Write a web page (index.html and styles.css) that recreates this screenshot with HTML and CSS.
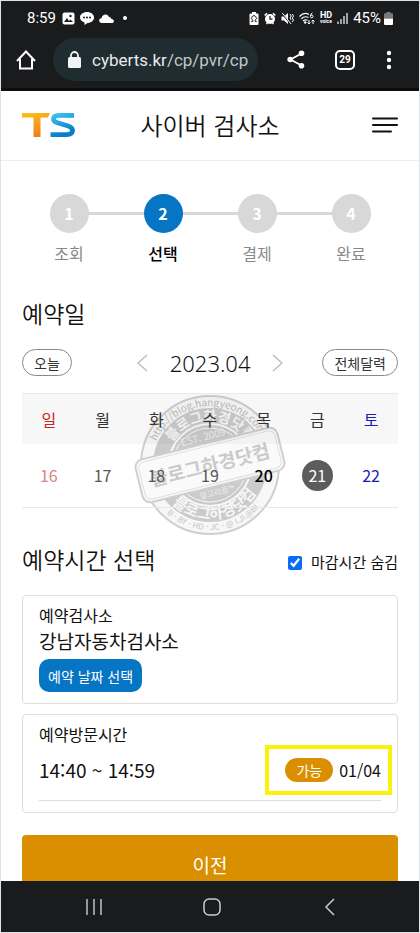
FILE: index.html
```html
<!DOCTYPE html>
<html lang="ko">
<head>
  <meta charset="UTF-8">
  <meta name="viewport" content="width=device-width, initial-scale=1">
  <title>사이버 검사소</title>
  <link rel="stylesheet" href="styles.css">
</head>
<body>
  <div class="phone">
    <div class="status-bar">
      <span>8:59</span>
      <svg width="13" height="13" viewBox="0 0 13 13"><rect x="0.5" y="0.5" width="12" height="12" rx="2" fill="#fff"/><path d="M2 10l3-4 2 3 1.500-1.500L11 10z" fill="#1a1b1d"/><circle cx="8.500" cy="4" r="1.200" fill="#1a1b1d"/></svg>
      <svg width="14" height="14" viewBox="0 0 14 14"><path d="M7 1c3.900 0 7 2.400 7 5.500S10.900 12 7.500 12L4.500 14v-2.600C1.800 10.600 0 8.800 0 6.500 0 3.400 3.100 1 7 1z" fill="#fff"/><circle cx="4" cy="6.500" r="1" fill="#1a1b1d"/><circle cx="7" cy="6.500" r="1" fill="#1a1b1d"/><circle cx="10" cy="6.500" r="1" fill="#1a1b1d"/></svg>
      <svg width="15" height="9" viewBox="0 0 15 9"><path d="M2.500 9a2.400 2.400 0 0 1 0-4.800C3 1.800 4.500 0.500 6.500 0.500c1.700 0 3 1 3.500 2.600 1.400 0 2.200.9 2.400 2 1.600.1 2.500.9 2.500 2.100 0 1.100-.8 1.800-2 1.800z" fill="#fff"/></svg>
      <span class="dot"></span>
      <div class="status-right">
        <svg width="10" height="13" viewBox="0 0 10 13"><path d="M3 0h4v1.500h1.500q1 0 1 1V12q0 1-1 1h-7q-1 0-1-1V2.500q0-1 1-1H3z" fill="#fff"/><path d="M2.300 9.500h1.500V8.200a2.400 2.400 0 1 1 2.400 0v1.300h1.500" fill="none" stroke="#1a1b1d" stroke-width="1"/></svg>
        <svg width="12" height="13" viewBox="0 0 12 13"><circle cx="6" cy="7" r="5" fill="#fff"/><path d="M0.700 3.500L3 1.200M11.300 3.500L9 1.200M2.500 12L3.500 11M9.500 12L8.500 11" stroke="#fff" stroke-width="1.600"/><path d="M6 4v3.200h2.500" stroke="#1a1b1d" stroke-width="1.200" fill="none"/></svg>
        <svg width="13" height="13" viewBox="0 0 13 13"><path d="M0.500 4.500H3L7 1v11L3 8.500H0.500z" fill="#fff"/><path d="M0.500 1l9.500 11" stroke="#1a1b1d" stroke-width="1.500"/><path d="M1.200 1l9 11" stroke="#fff"/><path d="M9 2l1.200 2L9 6l1.200 2M11.300 2l1.200 2-1.200 2 1.200 2-1.200 2" stroke="#fff" fill="none"/></svg>
        <svg width="16" height="13" viewBox="0 0 16 13"><path d="M0.500 4.500Q5-0.500 10 2.500M2.200 6.800Q5.500 3.500 9.500 5.500M4 9Q6 7 8.500 8.300" stroke="#fff" stroke-width="1.200" fill="none"/><circle cx="6.200" cy="10.500" r="1.200" fill="#fff"/><path d="M13.500 1q-2 .5-2 3" stroke="#fff" fill="none"/><circle cx="12.700" cy="4.500" r="1.300" stroke="#fff" fill="none"/><path d="M10 8v4M8.500 10.500L10 12l1.500-1.500M14 12V8M12.500 9.500L14 8l1.500 1.500" stroke="#fff" fill="none"/></svg>
        <span class="hd">HD<small>voice</small></span>
        <svg width="11" height="12" viewBox="0 0 11 12"><path d="M1 12V9.500M4 12V7M7 12V4M10 12V1" stroke="#fff" stroke-width="1.200"/></svg>
        <span>45%</span>
        <svg class="battery" width="9" height="13" viewBox="0 0 9 13"><path d="M2.500 0h4v1.200H8q1 0 1 1V6.500H0V2.200q0-1 1-1h1.500z" fill="#77797b"/><path d="M0 6.500h9V12q0 1-1 1H1q-1 0-1-1z" fill="#fff"/></svg>
      </div>
    </div>

    <div class="browser-bar">
      <button class="icon-button" aria-label="홈">
        <svg width="20" height="20" viewBox="0 0 20 20"><path d="M4 9v9.500h12V9M1 11L10 1.500 19 11" fill="none" stroke="#fff" stroke-width="2"/></svg>
      </button>
      <div class="address">
        <svg width="13" height="17" viewBox="0 0 13 17"><rect y="6" width="13" height="11" rx="1.500" fill="#f1f3f4"/><path d="M3 7V4.500a3.500 3.500 0 0 1 7 0V7" fill="none" stroke="#f1f3f4" stroke-width="1.800"/></svg>
        <span class="url">cyberts.kr<span>/cp/pvr/cp</span></span>
      </div>
      <button class="icon-button share" aria-label="공유">
        <svg width="18" height="19" viewBox="0 0 18 19"><path d="M14.500 3.500L3.500 9.500l11 6" fill="none" stroke="#fff" stroke-width="1.800"/><circle cx="14.500" cy="3.200" r="2.800" fill="#fff"/><circle cx="3.200" cy="9.500" r="2.800" fill="#fff"/><circle cx="14.500" cy="15.800" r="2.800" fill="#fff"/></svg>
      </button>
      <button class="tabs">29</button>
      <button class="icon-button more" aria-label="메뉴">
        <svg width="6" height="20" viewBox="0 0 6 20"><circle cx="3" cy="3" r="2.200" fill="#fff"/><circle cx="3" cy="10" r="2.200" fill="#fff"/><circle cx="3" cy="17" r="2.200" fill="#fff"/></svg>
      </button>
    </div>

    <header class="site-header">
      <a href="#" class="logo" aria-label="TS">
        <svg width="54" height="24" viewBox="0 0 54 24">
          <defs>
            <linearGradient id="orange" x1="0" y1="0" x2="0.300" y2="1"><stop offset="0" stop-color="#ffc01c"/><stop offset="1" stop-color="#f07f1c"/></linearGradient>
            <linearGradient id="blue" x1="0" y1="0" x2="0.500" y2="1"><stop offset="0" stop-color="#3cc4ee"/><stop offset="1" stop-color="#067fcb"/></linearGradient>
          </defs>
          <path d="M0 0h28l-2 4.500h-7.500V24h-7V4.500H0z" fill="url(#orange)"/>
          <path d="M52 2.400H37q-5.500 0-5.500 3.600 0 2.500 4 3.800l10 3q5 1.500 5 4.700 0 4.100-6 4.100H28.500" fill="none" stroke="url(#blue)" stroke-width="4.800"/>
        </svg>
      </a>
      <h1>사이버 검사소</h1>
      <button class="icon-button" aria-label="전체 메뉴">
        <svg width="26" height="16" viewBox="0 0 26 16"><path d="M1 1.500h24M1 8h24M1 14.500h18" stroke="#111" stroke-width="2" stroke-linecap="round"/></svg>
      </button>
    </header>

    <main>
      <ol class="steps">
        <li><b>1</b>조회</li>
        <li class="active"><b>2</b>선택</li>
        <li><b>3</b>결제</li>
        <li><b>4</b>완료</li>
      </ol>

      <h2>예약일</h2>
      <div class="month-bar">
        <button class="pill">오늘</button>
        <div class="month">
          <button class="icon-button" aria-label="이전 달"><svg width="11" height="18" viewBox="0 0 11 18"><path d="M10 1L1 9l9 8" fill="none" stroke="#bbb" stroke-width="1.400"/></svg></button>
          <span>2023.04</span>
          <button class="icon-button" aria-label="다음 달"><svg width="11" height="18" viewBox="0 0 11 18"><path d="M1 1l9 8-9 8" fill="none" stroke="#bbb" stroke-width="1.400"/></svg></button>
        </div>
        <button class="pill">전체달력</button>
      </div>

      <div class="calendar">
        <svg class="stamp" width="156" height="144" viewBox="-78 -72 156 144">
          <defs>
            <path id="arc-url" d="M-59 0A59 59 0 0 1 59 0"/>
            <path id="arc-top" d="M-44 0A44 44 0 0 1 44 0"/>
            <path id="arc-bottom" d="M-54 0A54 54 0 0 0 54 0"/>
            <path id="arc-outer" d="M-65 0A65 65 0 0 0 65 0"/>
          </defs>
          <circle r="69" fill="#f7f7f7" stroke="#cfcfcf" stroke-width="2"/>
          <circle r="57" fill="#cbcbcb"/>
          <circle r="41" fill="#cbcbcb" stroke="#f7f7f7" stroke-width="2"/>
          <circle r="37" fill="none" stroke="#f7f7f7"/>
          <g text-anchor="middle" font-weight="700">
            <text font-size="10" font-weight="400" fill="#bcbcbc"><textPath href="#arc-url" startOffset="48%">http://blog.hangyeong.com</textPath></text>
            <text font-size="14" fill="#f7f7f7"><textPath href="#arc-top" startOffset="50%">블로그하경닷컴</textPath></text>
            <text font-size="15" fill="#f7f7f7"><textPath href="#arc-bottom" startOffset="54%">블로그하경닷컴</textPath></text>
            <text font-size="8" font-weight="400" fill="#c4c4c4"><textPath href="#arc-outer" startOffset="52%">B - BY - HD - JC - @ I.JI.@BI</textPath></text>
            <g transform="rotate(-14)">
              <text y="-25" font-size="10" font-weight="400" fill="#eee">EST. 2009</text>
              <rect x="-73" y="-22" width="146" height="44" rx="8" fill="#fafafa" stroke="#cfcfcf" stroke-width="2"/>
              <rect x="-70" y="-19" width="140" height="38" rx="6" fill="none" stroke="#e0e0e0"/>
              <text y="7" font-size="19" fill="#cacaca">블로그하경닷컴</text>
              <text y="31" font-size="8" font-weight="400" fill="#eee">알고리즘™</text>
            </g>
          </g>
        </svg>
        <table>
          <thead>
            <tr><th class="sun">일</th><th>월</th><th>화</th><th>수</th><th>목</th><th>금</th><th class="sat">토</th></tr>
          </thead>
          <tbody>
            <tr><td class="sun">16</td><td>17</td><td>18</td><td>19</td><td class="open">20</td><td><span class="selected">21</span></td><td class="sat">22</td></tr>
          </tbody>
        </table>
      </div>

      <div class="time-head">
        <h2>예약시간 선택</h2>
        <label><input type="checkbox" checked>마감시간 숨김</label>
      </div>

      <section class="card">
        <h3>예약검사소</h3>
        <p>강남자동차검사소</p>
        <button class="date-button">예약 날짜 선택</button>
      </section>

      <section class="card visit">
        <h3>예약방문시간</h3>
        <div class="time-row">
          <p>14:40 ~ 14:59</p>
          <div class="slots"><span class="badge">가능</span>01/04</div>
        </div>
      </section>

      <button class="prev-button">이전</button>
    </main>

    <nav class="system-nav">
      <button class="icon-button" aria-label="최근 앱"><svg width="18" height="18" viewBox="0 0 18 18"><path d="M2 1v16M9 1v16M16 1v16" stroke="#ccc" stroke-width="1.400"/></svg></button>
      <button class="icon-button" aria-label="홈 화면"><svg width="18" height="18" viewBox="0 0 18 18"><rect x="1" y="1" width="16" height="16" rx="5" fill="none" stroke="#ccc" stroke-width="1.500"/></svg></button>
      <button class="icon-button" aria-label="뒤로"><svg width="18" height="18" viewBox="0 0 18 18"><path d="M13 1L5 9l8 8" fill="none" stroke="#ccc" stroke-width="1.500"/></svg></button>
    </nav>
  </div>
</body>
</html>
```

FILE: styles.css
```css
*, *::before, *::after {
  box-sizing: border-box;
}

body {
  margin: 0;
  font-family: "Noto Sans CJK KR", sans-serif;
  font-size: 16px;
  line-height: 24px;
  color: #111;
}

h1, h2, h3, p {
  margin: 0;
  font-weight: 400;
}

h1, h2 {
  font-size: 24px;
  line-height: 34px;
  font-weight: 350;
}

h2 {
  font-size: 23px;
}

h3 {
  font-size: 16px;
}

button {
  font-family: inherit;
  cursor: pointer;
}

svg {
  display: block;
  flex-shrink: 0;
}

.phone {
  display: flex;
  flex-direction: column;
  height: 100vh;
  border: 1px solid #dfe3e3;
  background: #fff;
}

.icon-button {
  padding: 0;
  border: none;
  background: none;
}

/* phone status bar */
.status-bar {
  display: flex;
  align-items: center;
  gap: 5px;
  height: 34px;
  padding: 0 26px;
  background: #1a1b1d;
  color: #fff;
  font-family: Roboto, sans-serif;
  font-size: 15px;
}

.status-bar > span:first-child {
  margin-right: 1px;
}

.dot {
  width: 4px;
  height: 4px;
  margin-left: 4px;
  border-radius: 50%;
  background: #fff;
}

.status-right {
  display: flex;
  align-items: center;
  gap: 5px;
  margin-left: auto;
}

.hd {
  font-size: 9px;
  line-height: 7px;
  font-weight: 700;
}

.hd small {
  display: block;
  font-size: 5px;
  line-height: 5px;
}

.battery {
  margin-left: -2px;
}

/* browser bar */
.browser-bar {
  display: flex;
  align-items: center;
  height: 56px;
  padding: 0 27px 4px 15px;
  border-bottom: 3px solid #0e0e10;
  background: #1a1b1d;
  color: #fff;
  font-family: Roboto, sans-serif;
}

.address {
  display: flex;
  flex: 1;
  align-items: center;
  gap: 11px;
  min-width: 0;
  height: 43px;
  margin-left: 17px;
  padding: 0 10px 0 15px;
  border-radius: 22px;
  background: #1f2c30;
}

.url {
  overflow: hidden;
  font-size: 17px;
  white-space: nowrap;
  color: #e8eaed;
}

.url span {
  color: #c0c8ca;
}

.share {
  margin-left: 29px;
}

.tabs {
  width: 20px;
  height: 20px;
  margin-left: 30px;
  padding: 0;
  border: 2px solid #fff;
  border-radius: 5px;
  background: none;
  color: #fff;
  font-size: 10px;
  line-height: 16px;
  font-weight: 700;
}

.more {
  margin-left: 31px;
}

/* site header */
.site-header {
  display: flex;
  align-items: center;
  justify-content: space-between;
  height: 70px;
  padding: 0 21px 2px;
  border-bottom: 1px solid #eee;
  flex-shrink: 0;
}

.site-header .logo {
  width: 54px;
}

.site-header .icon-button {
  width: 54px;
  display: flex;
  justify-content: flex-end;
}

main {
  flex: 1;
  min-height: 0;
  padding: 33px 21px 0;
  overflow: hidden;
}

.steps {
  display: flex;
  margin: 0 0 31px;
  padding: 0;
  list-style: none;
  text-align: center;
  color: #888;
}

.steps li {
  position: relative;
  flex: 1;
}

.steps li + li::before {
  content: "";
  position: absolute;
  top: 18px;
  right: 50%;
  width: 100%;
  height: 3px;
  background: #d8d8d8;
}

.steps b {
  display: block;
  position: relative;
  z-index: 1;
  width: 39px;
  height: 39px;
  margin: 0 auto 8px;
  border-radius: 50%;
  background: #d8d8d8;
  color: #fff;
  line-height: 39px;
}

.steps .active {
  color: #000;
  font-weight: 500;
}

.steps .active b {
  background: #0675c4;
}

.month-bar {
  display: flex;
  align-items: center;
  justify-content: space-between;
  margin: 19px 0 17px;
}

.pill {
  height: 27px;
  padding: 0 11px;
  border: 1px solid #888;
  border-radius: 14px;
  background: #fff;
  color: #333;
  font-size: 14px;
  line-height: 24px;
}

.month {
  display: flex;
  align-items: center;
  gap: 22px;
  margin-left: 26px;
  font-family: "Noto Sans", sans-serif;
  font-size: 22px;
  font-weight: 300;
}

/* calendar */
.calendar {
  position: relative;
}

.stamp {
  position: absolute;
  top: 0;
  left: 50%;
  transform: translateX(-50%);
}

table {
  position: relative;
  width: 100%;
  border-collapse: collapse;
  table-layout: fixed;
  border-top: 1px solid #e8e8e8;
  border-bottom: 1px solid #e8e8e8;
}

th, td {
  padding: 0;
  color: #555;
  font-weight: 400;
  text-align: center;
}

th {
  height: 50px;
  background: rgba(0, 0, 0, 0.03);
  color: #333;
}

td {
  height: 64px;
}

th.sun {
  color: #c8232c;
}

td.sun {
  color: #e08080;
}

th.sat, td.sat {
  color: #1c1cb4;
}

td.open {
  color: #000;
  font-weight: 500;
}

.selected {
  display: block;
  width: 31px;
  height: 31px;
  margin: 0 auto;
  border-radius: 50%;
  background: #5c5c5c;
  color: #fff;
  line-height: 31px;
}

/* time selection */
.time-head {
  display: flex;
  align-items: center;
  justify-content: space-between;
  margin: 34px 0 19px;
}

.time-head label {
  display: flex;
  align-items: center;
  padding-top: 6px;
  font-size: 15px;
}

.time-head input {
  width: 14px;
  height: 14px;
  margin: 2px 9px 0 0;
  accent-color: #0a6cf5;
}

.card {
  margin-bottom: 10px;
  padding: 7px 16px 11px;
  border: 1px solid #ddd;
  border-radius: 4px;
}

.card p {
  font-size: 19px;
  line-height: 28px;
}

.date-button {
  display: block;
  height: 33px;
  margin-top: 4px;
  padding: 0 9px;
  border: none;
  border-radius: 10px;
  background: #0675c4;
  color: #fff;
  font-size: 14px;
}

.time-row {
  display: flex;
  align-items: center;
  justify-content: space-between;
  position: relative;
  margin-top: 10px;
  padding-bottom: 16px;
  border-bottom: 1px solid #ddd;
}

.time-row::after {
  content: "";
  position: absolute;
  top: -11px;
  right: -11px;
  width: 127px;
  height: 50px;
  border: 4px solid #fbf10a;
}

.slots {
  display: flex;
  align-items: center;
  gap: 6px;
}

.badge {
  padding: 0 11px;
  border-radius: 12px;
  background: #d98f00;
  color: #fff;
  font-size: 14px;
}

.prev-button {
  width: 100%;
  height: 58px;
  margin-top: 12px;
  border: none;
  border-radius: 4px;
  background: #d98f00;
  color: #fff;
  font-size: 19px;
}

/* system navigation */
.system-nav {
  display: flex;
  align-items: center;
  justify-content: space-around;
  height: 51px;
  padding: 0 30px 0 34px;
  background: #1a1b1d;
  flex-shrink: 0;
}
```
